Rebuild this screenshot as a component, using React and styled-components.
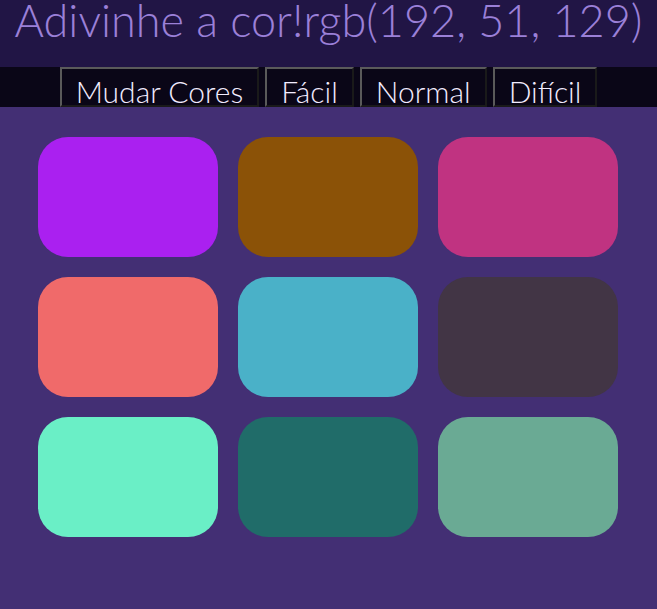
import React from 'react';
import styled, { createGlobalStyle } from 'styled-components';

const GlobalStyle = createGlobalStyle`
	body {
		margin: 0;
		background: #432f74;
		font-family: 'Lato', 'Liberation Sans', sans-serif;
	}
`;

const colors = [
	'rgb(170, 32, 240)',
	'rgb(139, 82, 7)',
	'rgb(192, 51, 129)',
	'rgb(240, 106, 106)',
	'rgb(74, 177, 200)',
	'rgb(66, 53, 69)',
	'rgb(106, 239, 198)',
	'rgb(32, 108, 105)',
	'rgb(106, 170, 148)',
];

const App = () => {
	return (
		<>
			<GlobalStyle />
			<Header>
				<Title>
					Adivinhe a cor!<span>rgb(192, 51, 129)</span>
				</Title>
			</Header>
			<Nav>
				<NavButton>Mudar Cores</NavButton>
				<NavButton>Fácil</NavButton>
				<NavButton>Normal</NavButton>
				<NavButton>Difícil</NavButton>
			</Nav>
			<Board>
				{colors.map((c, i) => (
					<Square key={i} $color={c} />
				))}
			</Board>
		</>
	);
};

export default App;

const Header = styled.header`
	height: 67px;
	background: #211545;
	display: flex;
	justify-content: center;
	align-items: flex-start;
	overflow: hidden;
`;

const Title = styled.h1`
	margin: 0;
	font-weight: 300;
	font-size: 45px;
	line-height: 40px;
	color: #9b80d8;
	white-space: nowrap;
`;

const Nav = styled.nav`
	height: 40px;
	background: #0a0617;
	display: flex;
	justify-content: center;
	gap: 6px;
`;

const NavButton = styled.button`
	height: 40px;
	padding: 6px 14px 0;
	background: #0a0617;
	color: #f2ecff;
	font-family: 'Lato', 'Liberation Sans', sans-serif;
	font-weight: 300;
	font-size: 30px;
	line-height: 32px;
	border: 2px solid;
	border-color: #5a5a5a #1a1a1a #1a1a1a #5a5a5a;
`;

const Board = styled.main`
	width: 581px;
	margin: 30px auto 0;
	display: grid;
	grid-template-columns: repeat(3, 180px);
	gap: 20px;
`;

const Square = styled.div`
	height: 120px;
	border-radius: 30px;
	background: ${(p) => p.$color};
`;
